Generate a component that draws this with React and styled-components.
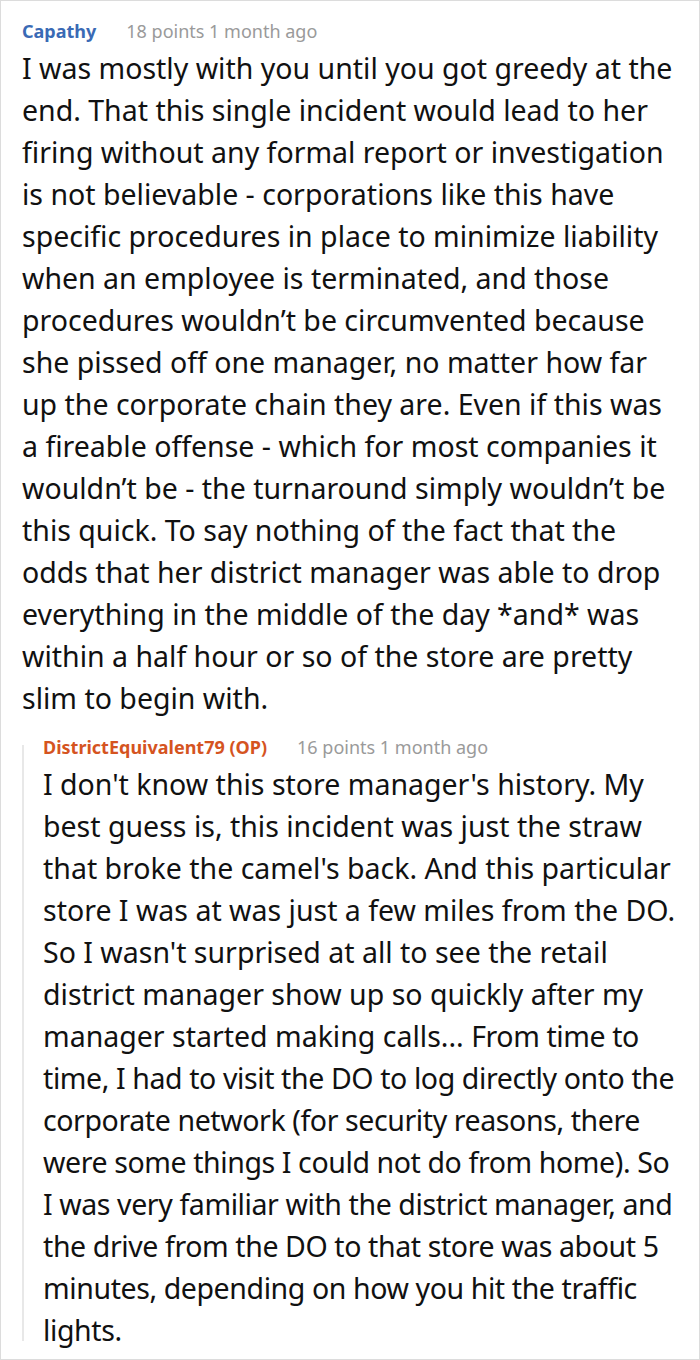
import React from "react";
import styled, { createGlobalStyle } from "styled-components";

const Global = createGlobalStyle`
  html, body { margin: 0; padding: 0; background: #fff; }
  body { font-family: "Noto Sans", "Open Sans", sans-serif; }
`;

const Frame = styled.div`
  box-sizing: border-box;
  width: 700px;
  height: 1360px;
  border: 1px solid #dcdcdc;
  padding: 16px 18px 0 21px;
  overflow: hidden;
`;

const Comment = styled.div`
  display: flex;
  flex-direction: column;
`;

const Reply = styled.div`
  position: relative;
  display: flex;
  flex-direction: column;
  margin-top: ${p => p.$top}px;
  padding-left: 21px;

  &::before {
    content: "";
    position: absolute;
    left: 0;
    top: 12px;
    bottom: 10px;
    width: 2px;
    background: #e8e8e8;
  }
`;

const Meta = styled.div`
  display: flex;
  align-items: baseline;
  gap: ${p => p.$gap}px;
  font-size: 18px;
  line-height: 28px;
`;

const Author = styled.span`
  font-weight: 700;
  color: ${p => p.$color};
`;

const Info = styled.span`
  color: #9a9a9a;
`;

const Body = styled.p`
  margin: 2px 0 0;
  font-size: 28.5px;
  line-height: 42px;
  color: #111;
`;

const Tight = styled.span`
  letter-spacing: -0.4px;
`;

export default function App() {
  return (
    <>
      <Global />
      <Frame>
        <Comment>
          <Meta $gap={30}>
            <Author $color="#3a6ab5">Capathy</Author>
            <Info>18 points 1 month ago</Info>
          </Meta>
          <Body>
            I was mostly with you until you got greedy at the end. That this single incident would lead to her firing without any formal report or investigation is not believable - corporations like this have specific procedures in place to minimize liability when an employee is terminated, and those procedures wouldn’t be circumvented because she pissed off one manager, no matter how far up the corporate chain they are. Even if this was a fireable offense - which for most companies it wouldn’t be - the turnaround simply wouldn’t be this quick. To say nothing of the fact that the odds that her district manager was able to drop everything in the middle of the day *and* was within a half hour or so of the store are pretty slim to begin with.
          </Body>
        </Comment>
        <Reply $top={14}>
          <Meta $gap={30}>
            <Author $color="#d5541f">DistrictEquivalent79 (OP)</Author>
            <Info>16 points 1 month ago</Info>
          </Meta>
          <Body>
            I don't know this store manager's history. My best guess is, this incident was just the straw that broke the camel's back. And this particular store I was at was just a few miles from the DO. So I wasn't surprised at all to see the retail district manager show up so quickly after my manager started making calls... <Tight>From time to time, I had to visit the DO to log directly onto the corporate network (for security reasons, there were some things I could not do from home). So I was very familiar with the district manager, and the drive from the DO to that store was about 5 minutes, depending on how you hit the traffic lights.</Tight>
          </Body>
        </Reply>
      </Frame>
    </>
  );
}
